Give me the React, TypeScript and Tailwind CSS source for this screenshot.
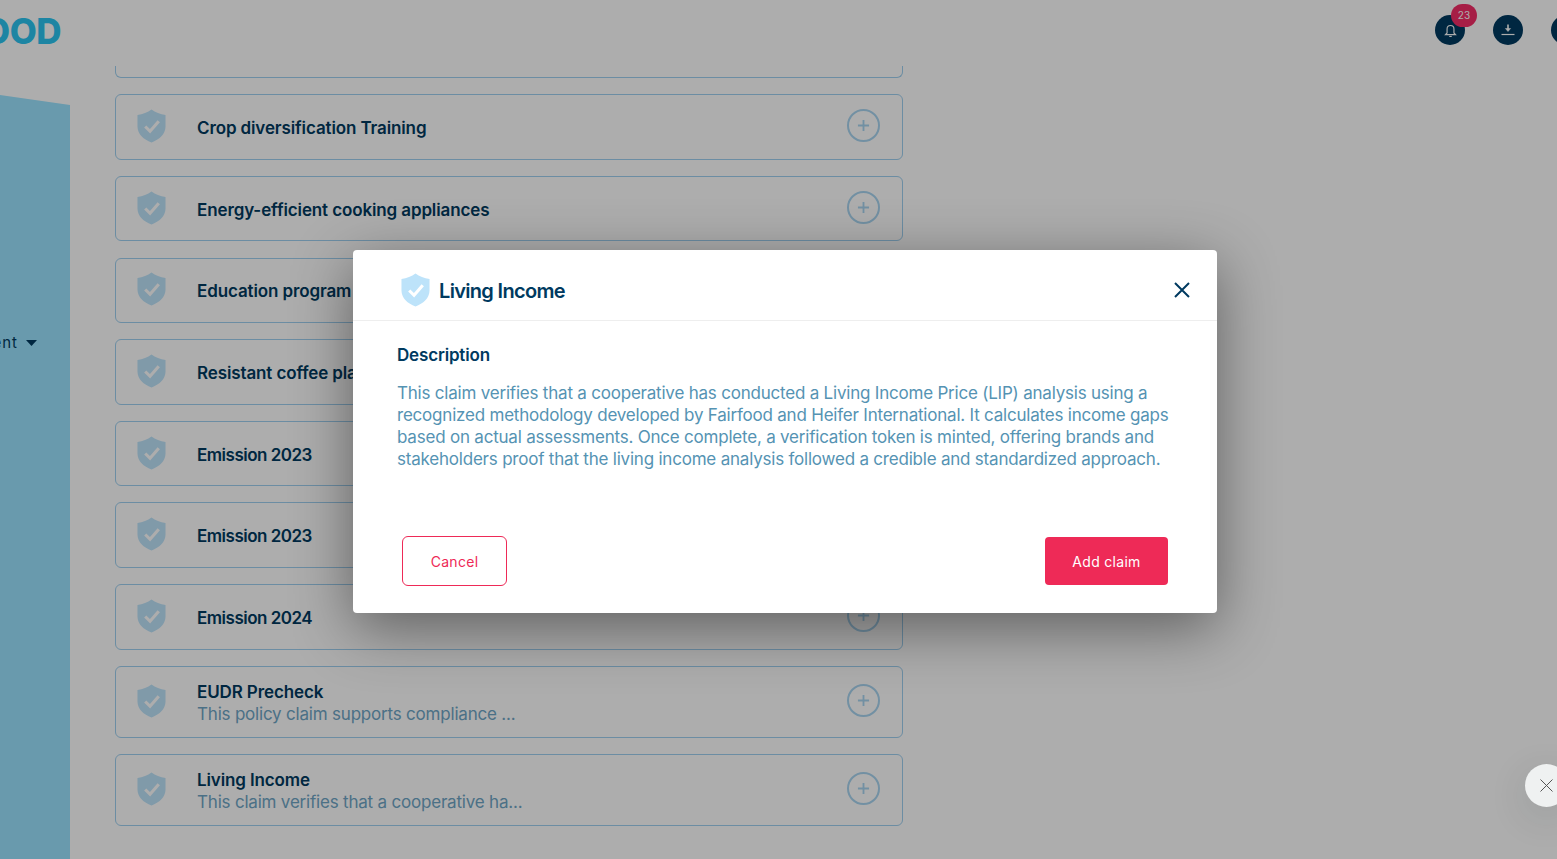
const font = "font-['Inter','Noto_Sans',sans-serif]";

const rows = [
  { title: "Crop diversification Training" },
  { title: "Energy-efficient cooking appliances" },
  { title: "Education program" },
  { title: "Resistant coffee plants" },
  { title: "Emission 2023", tight: true },
  { title: "Emission 2023", tight: true },
  { title: "Emission 2024", tight: true },
  { title: "EUDR Precheck", sub: "This policy claim supports compliance ..." },
  { title: "Living Income", sub: "This claim verifies that a cooperative ha..." },
];

function Shield({ className }: { className: string }) {
  return (
    <svg viewBox="0 0 30 35" className={className}>
      <path
        d="M15 0.5C19 3.5 24 5.5 29.5 6V18C29.5 26 23 31.5 15 34.5C7 31.5 0.5 26 0.5 18V6C6 5.5 11 3.5 15 0.5Z"
        fill="#bde3fa"
      />
      <path d="M8.5 18L13.5 23L22.5 12.5" fill="none" stroke="#fff" strokeWidth="3.2" />
    </svg>
  );
}

function Row({ title, sub, tight }: { title: string; sub?: string; tight?: boolean }) {
  return (
    <div
      className={`flex items-center w-[788px] shrink-0 border border-[#9fd0f0] rounded-md pl-[21px] pr-[22px] ${sub ? "h-[72px]" : "h-[65.5px]"}`}
    >
      <Shield className="w-[29px] h-[34px] shrink-0 -mt-0.5" />
      <div className="ml-[31px] flex-1 min-w-0 pt-[2px]">
        <div
          className={`text-[17px] leading-[22px] font-semibold text-[#003a60] ${tight ? "tracking-[-0.5px]" : "tracking-[-0.12px]"}`}
        >
          {title}
        </div>
        {sub && <div className="text-[17px] leading-[22px] tracking-[-0.2px] text-[#6fa6c6]">{sub}</div>}
      </div>
      <div className="w-[33px] h-[33px] rounded-full border-2 border-[#a9d5f0] flex items-center justify-center -mt-0.5 shrink-0">
        <svg viewBox="0 0 14 14" className="w-[13px] h-[13px]">
          <path d="M7 1V13M1 7H13" stroke="#a9d5f0" strokeWidth="2" />
        </svg>
      </div>
    </div>
  );
}

export default function App() {
  return (
    <div className={`relative w-full h-[859px] overflow-hidden bg-white flex ${font}`}>
      <div className="w-[115px] shrink-0 flex flex-col">
        <div className="h-[95px] w-[61px] shrink-0 overflow-hidden flex justify-end pt-[9px]">
          <span className="text-[35px] leading-[44px] font-extrabold text-[#2cc5f0] whitespace-nowrap tracking-[-0.5px]">
            FAIRFOOD
          </span>
        </div>
        <div className="w-[70px] flex-1 bg-[#9be3ff] [clip-path:polygon(0_0,100%_10px,100%_100%,0_100%)] overflow-hidden">
          <div className="mt-[237px] flex items-center justify-end pr-[33px] h-[22px] text-[15px] tracking-[1px] text-[#003a60] whitespace-nowrap">
            <span>ent</span>
            <svg viewBox="0 0 11 6" className="w-[11px] h-[6px] ml-[8px] shrink-0">
              <path d="M0 0H11L5.5 6Z" fill="#003a60" />
            </svg>
          </div>
        </div>
      </div>

      <div className="flex-1 min-w-0 flex flex-col">
        <div className="h-[66.2px] shrink-0 relative">
          <div className="absolute left-[1320px] top-[15px] w-[30px] h-[30px] rounded-full bg-[#003a60] flex items-center justify-center">
            <svg viewBox="0 0 24 24" className="w-[15px] h-[15px]" fill="none" stroke="#fff" strokeWidth="1.8">
              <path d="M6.5 16V9.5a5.5 5.5 0 0 1 11 0V16l2.5 2.5H4Z" />
              <path d="M10 21.5h4" />
            </svg>
          </div>
          <div className="absolute left-[1336px] top-[4px] w-[26px] h-[23px] rounded-full bg-[#f52d68] flex items-center justify-center text-[10px] text-white">
            23
          </div>
          <div className="absolute left-[1378px] top-[15px] w-[30px] h-[30px] rounded-full bg-[#003a60] flex items-center justify-center">
            <svg viewBox="0 0 14 14" className="w-[14px] h-[14px]" fill="none" stroke="#fff">
              <path d="M7 1.5V7" strokeWidth="1.6" />
              <path d="M4.4 5.5H9.6L7 8.5Z" fill="#fff" strokeWidth="0.5" />
              <path d="M0.5 11.5H13.5" strokeWidth="1.2" />
            </svg>
          </div>
          <div className="absolute left-[1436px] top-[15px] w-[30px] h-[30px] rounded-full bg-[#003a60]" />
        </div>
        <div className="w-[788px] h-[12px] shrink-0 border-x border-b border-[#9fd0f0] rounded-b-md mb-4" />
        <div className="flex flex-col gap-[16.17px]">
          {rows.map((r, i) => (
            <Row key={i} title={r.title} sub={r.sub} tight={r.tight} />
          ))}
        </div>
      </div>

      <div className="absolute inset-0 bg-black/[0.32] flex justify-center items-start pl-[13px] pt-[250px]">
        <div className="w-[864px] h-[363px] bg-white rounded-[4px] shadow-[0_15px_60px_rgba(0,0,0,0.45)] flex flex-col">
          <div className="h-[71px] shrink-0 border-b border-[#eeeeee] flex items-center pl-[48px] pr-[27px] pt-[10px]">
            <Shield className="w-[29px] h-[34px] shrink-0 mt-[-1px]" />
            <div className="ml-[9px] flex-1 text-[20px] leading-[26px] font-semibold tracking-[-0.68px] text-[#003a60] mt-[2px]">
              Living Income
            </div>
            <svg viewBox="0 0 16 16" className="w-[16px] h-[16px] shrink-0" fill="none" stroke="#003a60" strokeWidth="2">
              <path d="M1 1L15 15M15 1L1 15" />
            </svg>
          </div>
          <div className="pl-[44px] pr-[40px] pt-[23px] flex-1">
            <div className="text-[17px] leading-[22px] font-semibold tracking-[-0.17px] text-[#003a60]">Description</div>
            <p className="mt-4 text-[17px] leading-[22px] tracking-[-0.21px] text-[#5593b3]">
              This claim verifies that a cooperative has conducted a Living Income Price (LIP) analysis using a recognized
              methodology developed by Fairfood and Heifer International. It calculates income gaps based on actual
              assessments. Once complete, a verification token is minted, offering brands and stakeholders proof that the
              living income analysis followed a credible and standardized approach.
            </p>
          </div>
          <div className="flex items-center justify-between pl-[49px] pr-[49px] pb-[27px]">
            <button className="w-[105px] h-[50px] rounded-md border border-[#ee2a57] bg-white text-[14px] tracking-[0.3px] text-[#ee2a57]">
              Cancel
            </button>
            <button className="w-[123px] h-[48px] rounded-[4px] bg-[#ee2a57] text-[14px] tracking-[0.3px] text-white">
              Add claim
            </button>
          </div>
        </div>
      </div>

      <div className="absolute left-[1525px] top-[764px] w-[43px] h-[43px] rounded-full bg-[#eff1f1] shadow-[0_10px_40px_rgba(0,40,40,0.12)] flex items-center justify-center">
        <svg viewBox="0 0 13 13" className="w-[13px] h-[13px]" fill="none" stroke="#555" strokeWidth="1">
          <path d="M0.5 0.5L12.5 12.5M12.5 0.5L0.5 12.5" />
        </svg>
      </div>
    </div>
  );
}
